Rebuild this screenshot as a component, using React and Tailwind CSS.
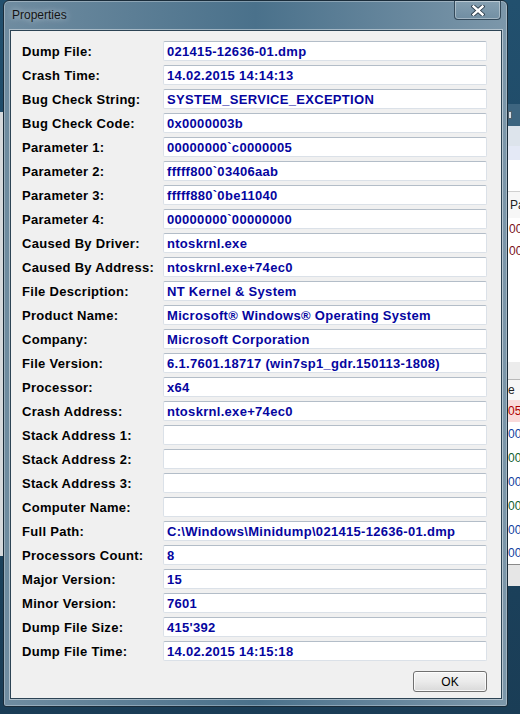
import React from "react";

const rows = [
  ["Dump File:", "021415-12636-01.dmp"],
  ["Crash Time:", "14.02.2015 14:14:13"],
  ["Bug Check String:", "SYSTEM_SERVICE_EXCEPTION"],
  ["Bug Check Code:", "0x0000003b"],
  ["Parameter 1:", "00000000`c0000005"],
  ["Parameter 2:", "fffff800`03406aab"],
  ["Parameter 3:", "fffff880`0be11040"],
  ["Parameter 4:", "00000000`00000000"],
  ["Caused By Driver:", "ntoskrnl.exe"],
  ["Caused By Address:", "ntoskrnl.exe+74ec0"],
  ["File Description:", "NT Kernel & System"],
  ["Product Name:", "Microsoft® Windows® Operating System"],
  ["Company:", "Microsoft Corporation"],
  ["File Version:", "6.1.7601.18717 (win7sp1_gdr.150113-1808)"],
  ["Processor:", "x64"],
  ["Crash Address:", "ntoskrnl.exe+74ec0"],
  ["Stack Address 1:", ""],
  ["Stack Address 2:", ""],
  ["Stack Address 3:", ""],
  ["Computer Name:", ""],
  ["Full Path:", "C:\\Windows\\Minidump\\021415-12636-01.dmp"],
  ["Processors Count:", "8"],
  ["Major Version:", "15"],
  ["Minor Version:", "7601"],
  ["Dump File Size:", "415'392"],
  ["Dump File Time:", "14.02.2015 14:15:18"],
];

// window behind the dialog, only a sliver of it shows on the right
function BackWindow() {
  return (
    <div className="absolute left-[508px] top-[104px] w-[12px] h-[482px] flex flex-col bg-[#f0f0f0] overflow-hidden font-['Liberation_Sans',sans-serif] text-[12px] leading-none">
      <div className="h-[22px] bg-[#3d6580] flex items-center">
        <div className="w-[4px] h-[8px] bg-[#d8dee4] border border-[#50606c]" />
      </div>
      <div className="h-[20px] bg-[#dde4ec]" />
      <div className="h-[14px] bg-[#e4e9f6]" />
      <div className="h-[32px] bg-white border-b border-[#d0d0d0]" />
      <div className="h-[26px] bg-[#f7f7f7] flex items-center pl-[2px] text-[#222]">Pa</div>
      <div className="h-[22px] bg-white flex items-center pl-[1px] text-[#7a1020]">00</div>
      <div className="h-[22px] bg-white flex items-center pl-[1px] text-[#7a1020]">00</div>
      <div className="h-[100px] bg-white" />
      <div className="h-[18px] bg-[#ececec] border-b border-[#b8b8b8]" />
      <div className="h-[20px] bg-[#f7f7f7] flex items-center text-[#222]">e</div>
      <div className="h-[22px] bg-[#f9dada] flex items-center text-[#b00000]">05</div>
      <div className="h-[24px] bg-white flex items-center text-[#1040a0]">004</div>
      <div className="h-[24px] bg-white flex items-center text-[#106030]">000</div>
      <div className="h-[24px] bg-white flex items-center text-[#1040a0]">004</div>
      <div className="h-[24px] bg-white flex items-center text-[#106030]">001</div>
      <div className="h-[24px] bg-white flex items-center text-[#1040a0]">005</div>
      <div className="h-[22px] bg-white flex items-center text-[#1040a0]">004</div>
      <div className="flex-1 bg-[#e6e6e6] border-t border-[#8a8a8a]" />
    </div>
  );
}

function CloseButton() {
  return (
    <div className="absolute right-[6px] top-0 w-[47px] h-[19px] rounded-b-[4px] border border-t-0 border-[#33495a] bg-gradient-to-b from-[#8fa8b8]/60 to-[#6d8ba0]/60 shadow-[inset_0_0_0_1px_rgba(255,255,255,0.35)] flex items-center justify-center">
      <svg width="14" height="11" viewBox="0 0 14 11">
        <path d="M2.5 1.5 L11.5 9.5 M11.5 1.5 L2.5 9.5" stroke="#2a3a48" strokeWidth="4.2" strokeLinecap="square" />
        <path d="M2.5 1.5 L11.5 9.5 M11.5 1.5 L2.5 9.5" stroke="#ffffff" strokeWidth="2.4" strokeLinecap="square" />
      </svg>
    </div>
  );
}

export default function App() {
  return (
    <div className="relative w-[520px] h-[714px] overflow-hidden bg-gradient-to-b from-[#22506e] via-[#1d4662] to-[#1a3d56]">
      <BackWindow />
      <div className="absolute left-0 top-[112px] w-[3px] h-[444px] bg-[#d6d9dc]" />

      <div className="absolute left-[3px] top-0 w-[505px] h-[707px] flex flex-col rounded-t-[6px] rounded-b-[3px] border border-[#1a2c3a] bg-gradient-to-r from-[#6f8ca0] via-[#4a718b] to-[#7c97aa] shadow-[inset_0_0_0_1px_rgba(255,255,255,0.3)]">
        <div className="relative h-[29px] flex items-center pl-[8px] pb-[1px]">
          <span className="font-['Liberation_Sans',sans-serif] text-[12px] text-[#141414] [text-shadow:0_0_6px_rgba(255,255,255,0.7)]">
            Properties
          </span>
          <CloseButton />
        </div>

        <div className="mx-[6px] mr-[5px] mb-[7px] flex-1 flex flex-col border border-[#2c4354] bg-[#f0f0f0] shadow-[0_0_0_1px_rgba(255,255,255,0.45)] pl-[11px] pr-[14px] pt-[10px] pb-[6px] font-['Liberation_Sans',sans-serif]">
          <div className="flex flex-col gap-[4px]">
            {rows.map(([label, value]) => (
              <div key={label} className="flex h-[20px] items-center">
                <div className="w-[141px] text-[13px] font-bold text-black leading-none tracking-[0.3px]">{label}</div>
                <div className="w-[324px] h-[20px] flex items-center pl-[3px] bg-white border border-[#dbe1e8] border-t-[#b3bdc8] rounded-[2px] text-[13px] font-bold text-[#0505a0] leading-none tracking-[0.3px] whitespace-nowrap overflow-hidden">
                  {value}
                </div>
              </div>
            ))}
          </div>
          <div className="flex justify-end mt-[10px]">
            <button className="w-[74px] h-[21px] rounded-[3px] border border-[#707070] bg-gradient-to-b from-[#f4f4f4] via-[#ebebeb] to-[#d9d9d9] shadow-[inset_0_0_0_1px_rgba(255,255,255,0.8)] text-[12px] text-black leading-none">
              OK
            </button>
          </div>
        </div>
      </div>
    </div>
  );
}
